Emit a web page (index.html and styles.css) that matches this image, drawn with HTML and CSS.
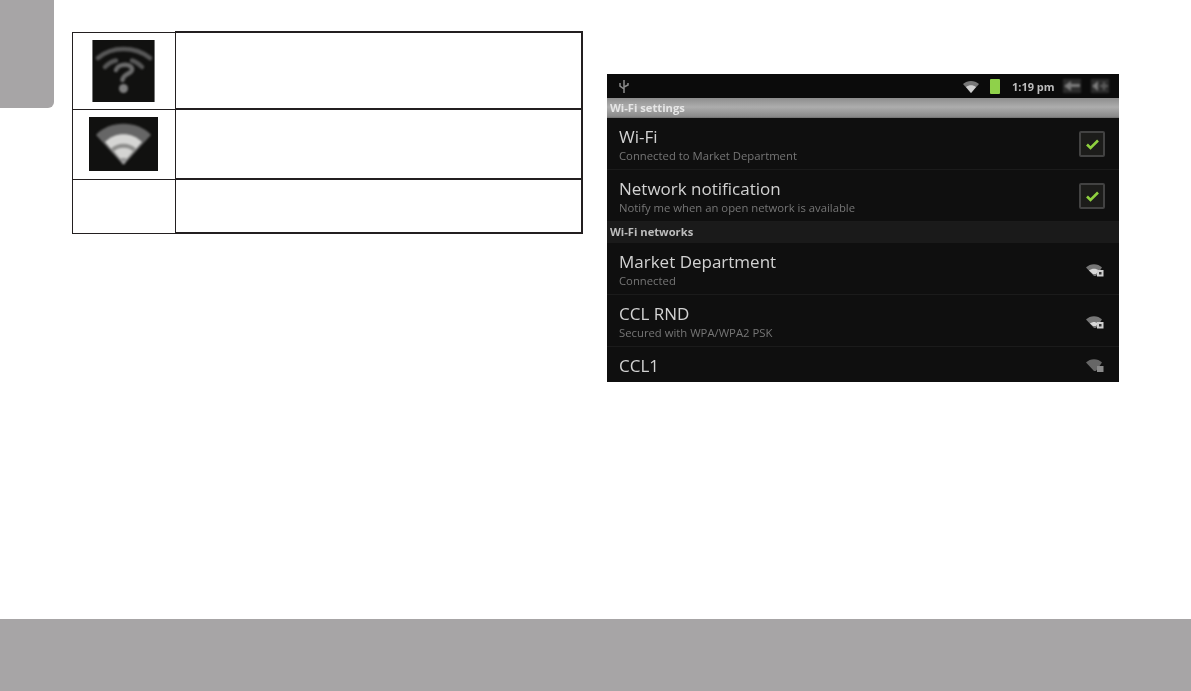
FILE: index.html
```html
<!DOCTYPE html>
<html lang="en">
<head>
<meta charset="utf-8">
<title>Wi-Fi settings</title>
<link rel="stylesheet" href="styles.css">
</head>
<body>
<div class="page">
  <main class="top">
    <div class="tab"></div>
    <div class="legend">
      <div class="cell icon-cell row-a">
        <div class="thumb thumb-q">
          <svg class="soft" width="63" height="62" viewBox="0 0 63 62">
            <g fill="none" stroke="#585858" stroke-linecap="round">
              <path d="M6 18C20 6 43 6 58 18" stroke-width="4.500"/>
              <path d="M13 27C18 22 21 21 24 20.500M40 20.500C44 21.500 47 24 50 27" stroke-width="4.500"/>
              <path d="M24 30C26 23 41 23 40 30C39 34 31 34 30.500 40" stroke="#6c6c6c" stroke-width="4.500"/>
            </g>
            <circle cx="31.500" cy="48.500" r="4.500" fill="#808080"/>
          </svg>
        </div>
      </div>
      <div class="cell text-cell row-a"></div>
      <div class="cell icon-cell row-b">
        <div class="thumb thumb-w">
          <svg class="soft" width="69" height="54" viewBox="0 0 69 54">
            <path d="M7 18C20 3 49 3 62 18L34.500 48Z" fill="#666"/>
            <path d="M16 25C26 14.500 43 14.500 53 25L34.500 47Z" fill="#d6d6d4"/>
            <path d="M22 31.500C29 25 40 25 47 31.500L34.500 47Z" fill="#8d8d8b"/>
            <path d="M25 34C30 29.500 39 29.500 44 34L36 44H33Z" fill="#d4d4d2"/>
            <path d="M31.500 41H37.500L36 47H33Z" fill="#999"/>
          </svg>
        </div>
      </div>
      <div class="cell text-cell row-b"></div>
      <div class="cell icon-cell row-c"></div>
      <div class="cell text-cell row-c"></div>
    </div>

    <section class="shot">
      <div class="status">
        <svg class="usb" width="12" height="16" viewBox="0 0 12 16">
          <path d="M6 15V2M6 11L2 8V5M6 9L10 7V5" fill="none" stroke="#8a8a8a" stroke-width="1.500"/>
        </svg>
        <div class="status-right">
          <svg class="st-wifi" width="18" height="13" viewBox="0 0 18 13">
            <path d="M1 4C5.500 0 12.500 0 17 4L9 13Z" fill="#777"/>
            <path d="M4 7C7 4.500 11 4.500 14 7L9 13Z" fill="#cfcfcf"/>
          </svg>
          <span class="battery"></span>
          <span class="clock">1:19 pm</span>
          <svg class="st-act" width="18" height="14" viewBox="0 0 18 14">
            <rect width="18" height="14" fill="#2c2c2c"/>
            <path d="M1 7L8 2V5H17V8H8V12Z" fill="#7c7c7c"/>
          </svg>
          <svg class="st-act last" width="18" height="14" viewBox="0 0 18 14">
            <rect width="18" height="14" fill="#2c2c2c"/>
            <path d="M1 7L7 2V12Z" fill="#7c7c7c"/>
            <path d="M9 6H12V3H14V6H17V8H14V11H12V8H9Z" fill="#5e5e5e"/>
          </svg>
        </div>
      </div>
      <h2 class="head head-light">Wi-Fi settings</h2>
      <div class="row">
        <div class="row-text"><div class="title">Wi-Fi</div><div class="sub">Connected to Market Department</div></div>
        <span class="check"><svg width="15" height="12" viewBox="0 0 15 12"><path d="M2 6.500L5.500 10L13 2.500" fill="none" stroke="#8fd13f" stroke-width="2.600"/></svg></span>
      </div>
      <div class="row">
        <div class="row-text"><div class="title">Network notification</div><div class="sub">Notify me when an open network is available</div></div>
        <span class="check"><svg width="15" height="12" viewBox="0 0 15 12"><path d="M2 6.500L5.500 10L13 2.500" fill="none" stroke="#8fd13f" stroke-width="2.600"/></svg></span>
      </div>
      <h2 class="head head-dark">Wi-Fi networks</h2>
      <div class="row">
        <div class="row-text"><div class="title">Market Department</div><div class="sub">Connected</div></div>
        <svg class="lock-wifi" width="20" height="15" viewBox="0 0 20 15">
          <path d="M1 4.500C5 0 13 0 17 4.500L11 13H9Z" fill="#777"/>
          <path d="M4 7.500C7 5 11 5 14 7.500L11 11H8Z" fill="#d8d8d8"/>
          <rect x="12" y="7" width="6.500" height="6.500" fill="#cfcfcf"/>
          <rect x="14" y="9" width="2.500" height="2.500" fill="#333"/>
        </svg>
      </div>
      <div class="row">
        <div class="row-text"><div class="title">CCL RND</div><div class="sub">Secured with WPA/WPA2 PSK</div></div>
        <svg class="lock-wifi" width="20" height="15" viewBox="0 0 20 15">
          <path d="M1 4.500C5 0 13 0 17 4.500L11 13H9Z" fill="#777"/>
          <path d="M5 8.500C8 6.500 10 6.500 13 8.500L11 11H8Z" fill="#d8d8d8"/>
          <rect x="12" y="7" width="6.500" height="6.500" fill="#cfcfcf"/>
          <rect x="14" y="9" width="2.500" height="2.500" fill="#333"/>
        </svg>
      </div>
      <div class="row row-cut">
        <div class="row-text"><div class="title">CCL1</div></div>
        <svg class="lock-wifi" width="20" height="15" viewBox="0 0 20 15">
          <path d="M1 4.500C5 0 13 0 17 4.500L11 13H9Z" fill="#666"/>
          <rect x="12" y="8" width="6.500" height="6" fill="#8a8a8a"/>
        </svg>
      </div>
    </section>
  </main>
  <footer class="foot"></footer>
</div>
</body>
</html>
```
FILE: styles.css
```css
* { box-sizing: border-box; }
html, body { margin: 0; padding: 0; background: #fff; }
body { font-family: "Open Sans", "Noto Sans", sans-serif; }

.page { width: 1191px; height: 691px; display: flex; flex-direction: column; overflow: hidden; }
.top { flex: 1; display: flex; align-items: flex-start; }
.foot { height: 72px; background: #a7a5a6; }

.tab { width: 54px; height: 108px; background: #a7a5a6; border-bottom-right-radius: 6px; }

.legend {
  margin: 32px 0 0 18px;
  width: 511px;
  display: grid;
  grid-template-columns: 102px 408px;
  grid-template-rows: 78px 70px 54px;
  border-left: 1px solid #231f20;
}
.cell { border-bottom: 1px solid #231f20; }
.row-a { border-top: 1px solid #231f20; }
.icon-cell { display: flex; align-items: center; justify-content: center; padding-right: 1px; }
.row-a.icon-cell, .row-b.icon-cell { align-items: flex-start; padding-top: 7px; }
.text-cell {
  border-left: 1px solid #231f20;
  border-right: 2px solid #231f20;
  border-bottom-width: 2px;
}
.text-cell.row-a { border-top-width: 2px; margin-top: -1px; }

.thumb { background: #111110; display: flex; }
.thumb-q { width: 63px; height: 62px; border-left: 1px solid #777; border-right: 1px solid #777; }
.thumb-q svg { margin-left: -1px; flex: none; }
.thumb-w { width: 69px; height: 54px; }
.soft { filter: blur(1.200px); overflow: hidden; }

.shot {
  margin: 74px 0 0 24px;
  width: 512px;
  height: 308px;
  background: #0f0f0f;
  overflow: hidden;
  color: #c9c9c9;
}
.status { height: 24px; background: #0b0b0b; display: flex; align-items: center; justify-content: space-between; padding: 0 10px 0 11px; }
.usb { filter: blur(.6px); }
.status-right { display: flex; align-items: center; }
.st-wifi { margin-right: 10px; filter: blur(.6px); }
.battery { width: 10px; height: 15px; background: #8fd14a; border-radius: 1px; margin-right: 12px; filter: blur(.5px); }
.clock { font-size: 11px; font-weight: 700; color: #bdbdbd; width: 43px; margin-right: 8px; filter: blur(.55px); white-space: nowrap; }
.st-act { margin-right: 10px; filter: blur(.8px); }
.st-act.last { margin-right: 0; }

.head { margin: 0; font-size: 11.200px; font-weight: 700; padding-left: 3px; display: flex; align-items: center; filter: blur(.5px); }
.head-light { height: 20px; color: #e6e6e6; background: linear-gradient(#8d8d8d, #adadad 45%, #8a8a8a 92%, #6d6d6d); padding-bottom: 2px; }
.head-dark { height: 21px; color: #bdbdbd; background: #1a1a1a; padding-bottom: 2px; }

.row {
  height: 52px;
  display: flex;
  align-items: center;
  justify-content: space-between;
  padding: 0 14px 0 12px;
  border-bottom: 1px solid #1b1b1b;
}
.row-cut { height: 36px; border-bottom: 0; align-items: flex-start; padding-top: 7px; }
.row-text { filter: blur(.55px); }
.title { font-size: 17px; line-height: 23px; color: #d2d2d2; white-space: nowrap; }
.sub { font-size: 11.300px; line-height: 15px; color: #767676; white-space: nowrap; }
.check {
  width: 26px; height: 26px;
  background: #1c1c1a;
  border: 2px solid #424242;
  border-radius: 2px;
  display: flex; align-items: center; justify-content: center;
  filter: blur(.5px);
}
.lock-wifi { filter: blur(.6px); margin-right: 0; margin-top: 4px; }
```
